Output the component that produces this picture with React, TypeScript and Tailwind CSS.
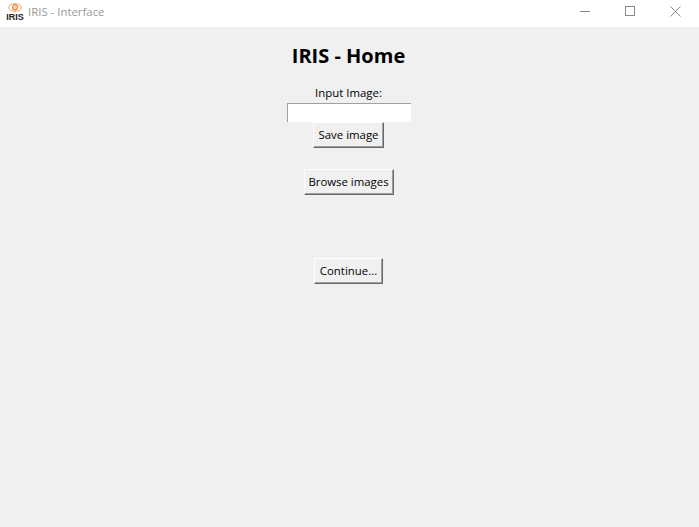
const FONT = "font-['Open_Sans','Noto_Sans',sans-serif]";

function IrisLogo() {
  return (
    <svg width="16" height="10" viewBox="0 0 16 10" fill="none" className="block">
      <ellipse cx="8" cy="5" rx="7" ry="4.2" stroke="#f0a060" strokeWidth="1.1" />
      <circle cx="8" cy="4.8" r="2.7" stroke="#ee8030" strokeWidth="1.4" />
      <circle cx="8" cy="4.8" r="0.8" fill="#f09048" />
    </svg>
  );
}

function TkButton({ label, w }: { label: string; w: string }) {
  return (
    <button
      className={`${w} block h-[26px] bg-[#f0f0f0] border border-t-white border-l-white border-r-[#696969] border-b-[#696969] shadow-[inset_-1px_-1px_0_#a0a0a0] text-[11.4px] leading-none text-black`}
    >
      {label}
    </button>
  );
}

export default function App() {
  return (
    <div className={`w-[699px] h-[527px] bg-[#f0f0f0] flex flex-col overflow-hidden ${FONT}`}>
      {/* ── Title bar ── */}
      <div className="h-[27px] bg-white flex items-start shrink-0">
        <div className="pl-[7px] pt-[3px] flex items-start">
          <div className="w-[16px] h-[18px] flex flex-col items-center">
            <IrisLogo />
            <span className="mt-px font-['Liberation_Sans',sans-serif] text-[9px] leading-[8px] font-bold text-[#222]">
              IRIS
            </span>
          </div>
          <span className="ml-[5px] text-[11.4px] leading-[17px] text-[#999]">IRIS - Interface</span>
        </div>
        <div className="ml-auto flex items-center h-[23px]">
          <svg width="11" height="11" viewBox="0 0 11 11" className="mr-[34px]">
            <path d="M0 5.5H10" stroke="#888" strokeWidth="1" />
          </svg>
          <svg width="11" height="11" viewBox="0 0 11 11" className="mr-[34px]">
            <rect x="0.5" y="0.5" width="9" height="9" fill="none" stroke="#888" strokeWidth="1" />
          </svg>
          <svg width="11" height="11" viewBox="0 0 11 11" className="mr-[18px]">
            <path d="M0.5 0.5L10.5 10.5M10.5 0.5L0.5 10.5" stroke="#888" strokeWidth="1" />
          </svg>
        </div>
      </div>

      {/* ── Body ── */}
      <div className="flex flex-col items-center w-[697px]">
        <h1 className="mt-[15px] h-[28px] text-[20px] leading-[28px] font-bold text-black">IRIS - Home</h1>
        <p className="mt-[14px] h-[18px] text-[11.4px] leading-[18px] text-black">Input Image:</p>
        <div className="mt-px w-[124px] h-[19px] bg-white border-t border-l border-[#a0a0a0]" />
        <TkButton label="Save image" w="w-[71px]" />
        <div className="mt-[21px]">
          <TkButton label="Browse images" w="w-[90px]" />
        </div>
        <div className="mt-[63px]">
          <TkButton label="Continue..." w="w-[69px]" />
        </div>
      </div>
    </div>
  );
}
